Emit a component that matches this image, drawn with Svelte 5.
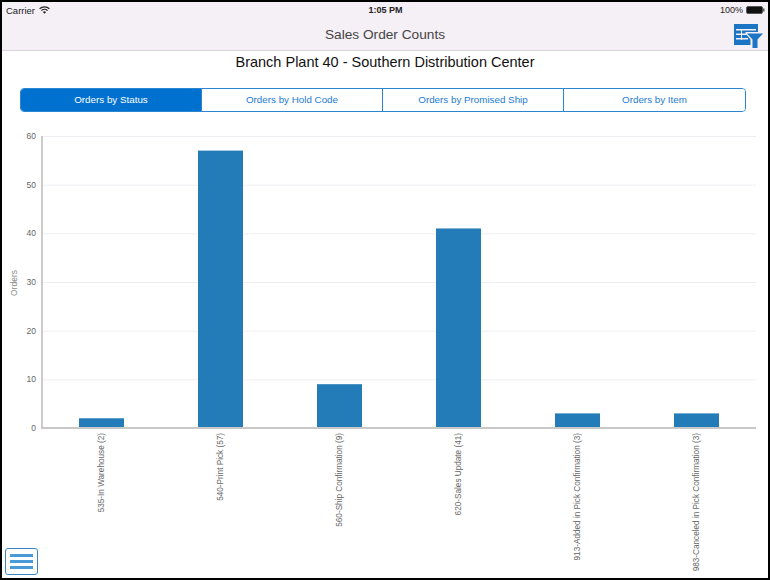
<script>
    const tabs = ['Orders by Status', 'Orders by Hold Code', 'Orders by Promised Ship', 'Orders by Item'];
    const rows = [
        { label: '535-In Warehouse (2)', value: 2 },
        { label: '540-Print Pick (57)', value: 57 },
        { label: '560-Ship Confirmation (9)', value: 9 },
        { label: '620-Sales Update (41)', value: 41 },
        { label: '913-Added in Pick Confirmation (3)', value: 3 },
        { label: '983-Canceled in Pick Confirmation (3)', value: 3 }
    ];
    const ticks = [0, 10, 20, 30, 40, 50, 60];
    const y = (v) => 15 + (60 - v) * (292 / 60);
</script>

<div class="frame">
    <header class="top">
        <div class="status">
            <div class="carrier">
                Carrier
                <svg width="11" height="8" viewBox="0 0 11 8">
                    <path d="M0.600 2.800a7 7 0 0 1 9.800 0M2.400 4.600a4.500 4.500 0 0 1 6.200 0" fill="none" stroke="#222" stroke-width="1.200" />
                    <path d="M3.900 5.900a2.400 2.400 0 0 1 3.200 0L5.500 7.800z" fill="#222" />
                </svg>
            </div>
            <div class="time">1:05 PM</div>
            <div class="battery">
                100%
                <svg width="19" height="8" viewBox="0 0 19 8">
                    <rect x="0.500" y="0.500" width="16" height="7" rx="1.500" fill="#111" stroke="#555" />
                    <rect x="17" y="2.500" width="1.500" height="3" fill="#555" />
                </svg>
            </div>
        </div>
        <div class="nav">
            <h1>Sales Order Counts</h1>
            <svg class="filter" width="29" height="24" viewBox="0 0 29 24">
                <rect x="0" y="0" width="24" height="21" fill="#1b75c4" />
                <path d="M2 5h20v1.500h-20zM2 9.500h15v1.500h-15zM2 14h12v1.500h-12zM7 5h1v11h-1z" fill="#f5eff6" />
                <path d="M11.500 8h17.500v1.500l-5 6v8.500h-7.500v-8.500l-5-6z" fill="#f5eff6" />
                <path d="M13 9.500h16l-5.500 6v8.500h-5v-8.500z" fill="#1b75c4" />
            </svg>
        </div>
    </header>

    <h2>Branch Plant 40 - Southern Distribution Center</h2>

    <div class="tabs">
        {#each tabs as tab, i}
            <button class:active={i === 0}>{tab}</button>
        {/each}
    </div>

    <svg class="chart" width="766" height="458" viewBox="0 0 766 458">
        {#each ticks as t}
            {#if t > 0}
                <line x1="41" x2="754" y1={y(t) + 0.5} y2={y(t) + 0.5} stroke="#f0edf2" />
            {/if}
            <text class="tick" x="34" y={y(t) + 3} text-anchor="end">{t}</text>
        {/each}
        <text class="axis-title" transform="translate(15 162) rotate(-90)" text-anchor="middle">Orders</text>

        {#each rows as row, i}
            <rect x={77 + i * 119} y={y(row.value)} width="45" height={307 - y(row.value)} fill="#237cb8" />
            <text class="label" transform="translate({102 + i * 119} 312) rotate(-90)" text-anchor="end">{row.label}</text>
        {/each}

        <line x1="40" x2="40" y1="15" y2="308" stroke="#cccccc" stroke-width="2" />
        <line x1="39" x2="754" y1="307" y2="307" stroke="#c8c8c8" stroke-width="2" />
    </svg>

    <button class="menu" aria-label="Menu">
        <span></span><span></span><span></span>
    </button>
</div>

<style>
    :global(body) {
        margin: 0;
    }

    .frame {
        position: relative;
        box-sizing: border-box;
        width: 770px;
        height: 580px;
        border: 2px solid #000;
        background-color: #fff;
        font-family: "Liberation Sans", Arial, sans-serif;
        overflow: hidden;
    }

    .top {
        background-color: #f5eff6;
        border-bottom: 1px solid #d8d8d8;
        height: 48px;
    }

    .status {
        display: grid;
        grid-template-columns: 1fr auto 1fr;
        align-items: center;
        height: 16px;
        padding: 0 3px 0 4px;
        font-size: 9.500px;
        color: #222;
    }

    .carrier {
        display: flex;
        align-items: center;
        gap: 4px;
    }

    .time {
        font-weight: bold;
        font-size: 9px;
    }

    .battery {
        display: flex;
        align-items: center;
        justify-content: flex-end;
        gap: 3px;
        font-size: 9px;
    }

    .nav {
        display: flex;
        align-items: center;
        justify-content: center;
        position: relative;
        height: 32px;
    }

    .nav h1 {
        margin: 0;
        font-size: 13.700px;
        font-weight: normal;
        color: #444;
    }

    .filter {
        position: absolute;
        right: 5px;
        top: 6px;
    }

    h2 {
        margin: 0;
        padding-top: 1px;
        height: 20px;
        line-height: 20px;
        text-align: center;
        font-size: 14.500px;
        font-weight: normal;
        color: #111;
    }

    .tabs {
        display: grid;
        grid-template-columns: 180px 181px 181px 1fr;
        margin: 16px 22px 0 18px;
        height: 24px;
        box-sizing: border-box;
        border: 1px solid #2a86d0;
        border-radius: 4px;
        overflow: hidden;
    }

    .tabs button {
        border: none;
        border-left: 1px solid #2a86d0;
        background-color: #fff;
        color: #1c7ad0;
        font-family: inherit;
        font-size: 9.800px;
        padding: 0 0 2px;
    }

    .tabs button:first-child {
        border-left: none;
    }

    .tabs button.active {
        background-color: #0071ce;
        color: #fff;
    }

    .chart {
        display: block;
        margin-top: 9px;
    }

    .tick {
        font-size: 8.500px;
        fill: #666;
    }

    .axis-title {
        font-size: 8.500px;
        fill: #888;
    }

    .label {
        font-size: 8.200px;
        fill: #666;
    }

    .menu {
        position: absolute;
        left: 3px;
        bottom: 3px;
        width: 33px;
        height: 27px;
        box-sizing: border-box;
        display: flex;
        flex-direction: column;
        justify-content: center;
        gap: 3px;
        padding: 0 4px;
        background-color: #fff;
        border: 1px solid #3d86c6;
        border-radius: 3px;
    }

    .menu span {
        display: block;
        height: 3px;
        background-color: #4a9ad8;
    }
</style>
